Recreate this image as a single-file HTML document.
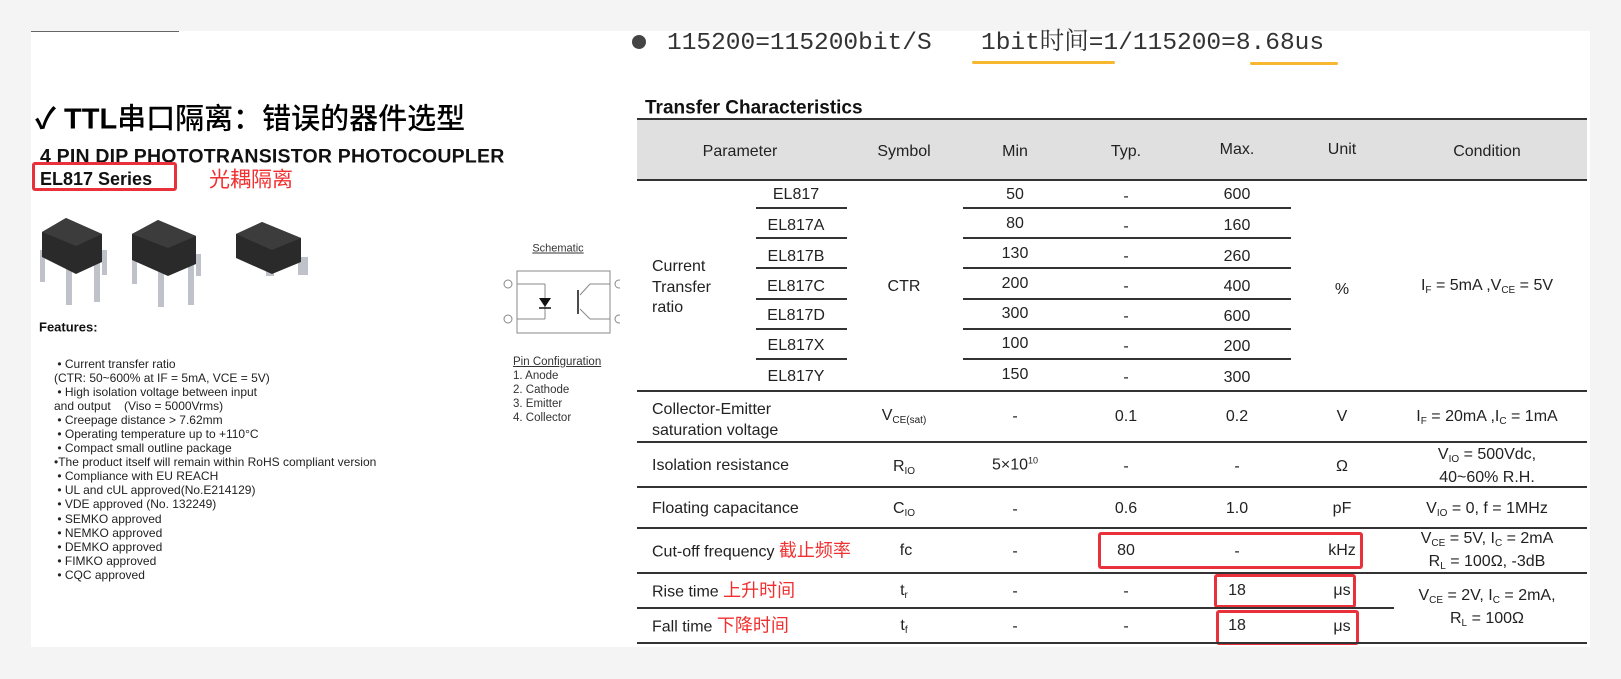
<!DOCTYPE html>
<html><head><meta charset="utf-8">
<style>
*{margin:0;padding:0;box-sizing:border-box}
body{width:1621px;height:679px;background:#f4f4f4;position:relative;overflow:hidden;font-family:"Liberation Sans","Noto Sans CJK SC",sans-serif;color:#111}
.card{position:absolute;left:31px;top:31px;width:1559px;height:616px;background:#fff}
.t{position:absolute;white-space:nowrap;line-height:1}
.c{transform:translate(-50%,-50%)}
.l{transform:translateY(-50%)}
.ln{position:absolute;height:2px;background:#333}
.tb{font-size:16px;color:#222}
.red{color:#f03030}
.box{position:absolute;border:3px solid #e8313a;border-radius:3px}
sub{font-size:10px;vertical-align:-3px}
sup{font-size:9px;vertical-align:6px}
.f{font-size:12px;color:#222}
</style></head><body>
<div class="card"></div>
<div style="position:absolute;left:31px;top:31px;width:148px;height:1px;background:#666"></div>

<!-- top line -->
<div style="position:absolute;left:632px;top:35px;width:14px;height:14px;border-radius:50%;background:#444"></div>
<div class="t l" style="left:667px;top:44px;font-family:'Liberation Mono','Noto Serif CJK SC',monospace;font-size:24.5px;color:#333;letter-spacing:0">115200=115200bit/S</div>
<div class="t l" style="left:981px;top:44px;font-family:'Liberation Mono','Noto Serif CJK SC',monospace;font-size:24.5px;color:#333">1bit时间=1/115200=8.68us</div>
<div style="position:absolute;left:972px;top:61px;width:143px;height:3px;background:#f7b731;border-radius:2px"></div>
<div style="position:absolute;left:1250px;top:62px;width:88px;height:3px;background:#f7b731;border-radius:2px"></div>

<!-- left -->
<div class="t l" style="left:35px;top:120px;font-size:29px;font-weight:bold;color:#000">✓ TTL<span style="font-weight:500">串口隔离：错误的器件选型</span></div>
<div class="t l" style="left:40px;top:157px;font-size:19.5px;font-weight:bold;color:#111;letter-spacing:0.2px">4 PIN DIP PHOTOTRANSISTOR PHOTOCOUPLER</div>
<div class="box" style="left:32px;top:162px;width:145px;height:29px"></div>
<div class="t l" style="left:40px;top:179px;font-size:18px;font-weight:bold">EL817 Series</div>
<div class="t l red" style="left:209px;top:180px;font-size:21px">光耦隔离</div>

<svg style="position:absolute;left:36px;top:212px" width="280" height="95" viewBox="0 0 280 95">
 <g fill="#bfc3c9"><rect x="4" y="38" width="5" height="32"/><rect x="30" y="48" width="6" height="45"/><rect x="58" y="45" width="6" height="45"/><rect x="66" y="38" width="5" height="25"/></g>
 <polygon points="6,20 30,6 66,22 66,50 40,62 6,45" fill="#2a2a2a"/>
 <polygon points="6,20 30,6 66,22 40,34" fill="#3c3c3c"/>
 <g fill="#bfc3c9"><rect x="96" y="42" width="5" height="30"/><rect x="122" y="52" width="6" height="43"/><rect x="152" y="48" width="6" height="45"/><rect x="160" y="42" width="5" height="22"/></g>
 <polygon points="96,22 122,8 160,24 160,52 132,64 96,48" fill="#2a2a2a"/>
 <polygon points="96,22 122,8 160,24 132,36" fill="#3c3c3c"/>
 <g fill="#bfc3c9"><rect x="230" y="40" width="8" height="24"/><rect x="262" y="45" width="10" height="18"/></g>
 <polygon points="200,22 226,10 265,26 265,50 236,62 200,46" fill="#2a2a2a"/>
 <polygon points="200,22 226,10 265,26 236,38" fill="#3c3c3c"/>
</svg>

<div class="t l" style="left:39px;top:327px;font-size:13px;font-weight:bold">Features:</div>
<div class="t f" style="left:54px;top:357px;line-height:14.05px;white-space:pre"> • Current transfer ratio
(CTR: 50~600% at IF = 5mA, VCE = 5V)
 • High isolation voltage between input
and output    (Viso = 5000Vrms)
 • Creepage distance &gt; 7.62mm
 • Operating temperature up to +110°C
 • Compact small outline package
•The product itself will remain within RoHS compliant version
 • Compliance with EU REACH
 • UL and cUL approved(No.E214129)
 • VDE approved (No. 132249)
 • SEMKO approved
 • NEMKO approved
 • DEMKO approved
 • FIMKO approved
 • CQC approved</div>

<div class="t c" style="left:558px;top:249px;font-size:11px;text-decoration:underline;color:#333">Schematic</div>
<svg style="position:absolute;left:500px;top:265px" width="120" height="75" viewBox="0 0 120 75">
 <g fill="none" stroke="#888" stroke-width="1"><rect x="17" y="6" width="93" height="62"/>
 <line x1="17" y1="19" x2="45" y2="19"/><line x1="45" y1="19" x2="45" y2="54"/><line x1="17" y1="54" x2="45" y2="54"/>
 <line x1="110" y1="19" x2="90" y2="19"/><line x1="90" y1="19" x2="80" y2="30"/><line x1="110" y1="54" x2="90" y2="54"/><line x1="90" y1="54" x2="80" y2="44"/>
 <circle cx="8" cy="19" r="4"/><circle cx="8" cy="54" r="4"/><circle cx="119" cy="19" r="4"/><circle cx="119" cy="54" r="4"/></g>
 <polygon points="39,33 51,33 45,42" fill="#111"/><line x1="39" y1="43" x2="51" y2="43" stroke="#111" stroke-width="1.5"/>
 <line x1="78" y1="25" x2="78" y2="49" stroke="#111" stroke-width="1.5"/>
</svg>
<div class="t f" style="left:513px;top:355px;font-size:11.5px;line-height:14px;color:#333"><u>Pin Configuration</u><br>1. Anode<br>2. Cathode<br>3. Emitter<br>4. Collector</div>

<!-- table -->
<div class="t l" style="left:645px;top:108px;font-size:19px;font-weight:bold">Transfer Characteristics</div>
<div style="position:absolute;left:637px;top:119px;width:950px;height:61px;background:#e0e0e0"></div>
<div class="ln" style="left:637px;top:118px;width:950px"></div>
<div class="ln" style="left:637px;top:179px;width:950px"></div>
<div class="t c tb" style="left:740px;top:152px">Parameter</div>
<div class="t c tb" style="left:904px;top:152px">Symbol</div>
<div class="t c tb" style="left:1015px;top:152px">Min</div>
<div class="t c tb" style="left:1126px;top:152px">Typ.</div>
<div class="t c tb" style="left:1237px;top:150px">Max.</div>
<div class="t c tb" style="left:1342px;top:150px">Unit</div>
<div class="t c tb" style="left:1487px;top:152px">Condition</div>

<div class="t c tb" style="left:796px;top:195px">EL817</div>
<div class="t c tb" style="left:796px;top:226px">EL817A</div>
<div class="t c tb" style="left:796px;top:257px">EL817B</div>
<div class="t c tb" style="left:796px;top:287px">EL817C</div>
<div class="t c tb" style="left:796px;top:316px">EL817D</div>
<div class="t c tb" style="left:796px;top:346px">EL817X</div>
<div class="t c tb" style="left:796px;top:377px">EL817Y</div>
<div class="t c tb" style="left:1015px;top:195px">50</div><div class="t c tb" style="left:1126px;top:197px">-</div><div class="t c tb" style="left:1237px;top:195px">600</div>
<div class="t c tb" style="left:1015px;top:224px">80</div><div class="t c tb" style="left:1126px;top:227px">-</div><div class="t c tb" style="left:1237px;top:226px">160</div>
<div class="t c tb" style="left:1015px;top:254px">130</div><div class="t c tb" style="left:1126px;top:257px">-</div><div class="t c tb" style="left:1237px;top:257px">260</div>
<div class="t c tb" style="left:1015px;top:284px">200</div><div class="t c tb" style="left:1126px;top:287px">-</div><div class="t c tb" style="left:1237px;top:287px">400</div>
<div class="t c tb" style="left:1015px;top:314px">300</div><div class="t c tb" style="left:1126px;top:317px">-</div><div class="t c tb" style="left:1237px;top:317px">600</div>
<div class="t c tb" style="left:1015px;top:344px">100</div><div class="t c tb" style="left:1126px;top:347px">-</div><div class="t c tb" style="left:1237px;top:347px">200</div>
<div class="t c tb" style="left:1015px;top:375px">150</div><div class="t c tb" style="left:1126px;top:378px">-</div><div class="t c tb" style="left:1237px;top:378px">300</div>
<div class="ln" style="left:756px;top:207px;width:91px"></div><div class="ln" style="left:963px;top:207px;width:328px"></div>
<div class="ln" style="left:756px;top:237px;width:91px"></div><div class="ln" style="left:963px;top:237px;width:328px"></div>
<div class="ln" style="left:756px;top:267px;width:91px"></div><div class="ln" style="left:963px;top:267px;width:328px"></div>
<div class="ln" style="left:756px;top:298px;width:91px"></div><div class="ln" style="left:963px;top:298px;width:328px"></div>
<div class="ln" style="left:756px;top:328px;width:91px"></div><div class="ln" style="left:963px;top:328px;width:328px"></div>
<div class="ln" style="left:756px;top:358px;width:91px"></div><div class="ln" style="left:963px;top:358px;width:328px"></div>
<div class="t tb" style="left:652px;top:257px;line-height:20.5px">Current<br>Transfer<br>ratio</div>
<div class="t c tb" style="left:904px;top:287px">CTR</div>
<div class="t c tb" style="left:1342px;top:290px">%</div>
<div class="t c tb" style="left:1487px;top:287px">I<sub>F</sub> = 5mA ,V<sub>CE</sub> = 5V</div>
<div class="ln" style="left:637px;top:390px;width:950px"></div>

<div class="t tb" style="left:652px;top:399px;line-height:21px">Collector-Emitter<br>saturation voltage</div>
<div class="t c tb" style="left:904px;top:417px">V<sub>CE(sat)</sub></div>
<div class="t c tb" style="left:1015px;top:417px">-</div>
<div class="t c tb" style="left:1126px;top:417px">0.1</div>
<div class="t c tb" style="left:1237px;top:417px">0.2</div>
<div class="t c tb" style="left:1342px;top:417px">V</div>
<div class="t c tb" style="left:1487px;top:418px">I<sub>F</sub> = 20mA ,I<sub>C</sub> = 1mA</div>
<div class="ln" style="left:637px;top:441px;width:950px"></div>

<div class="t l tb" style="left:652px;top:466px">Isolation resistance</div>
<div class="t c tb" style="left:904px;top:468px">R<sub>IO</sub></div>
<div class="t c tb" style="left:1015px;top:465px">5×10<sup>10</sup></div>
<div class="t c tb" style="left:1126px;top:467px">-</div>
<div class="t c tb" style="left:1237px;top:467px">-</div>
<div class="t c tb" style="left:1342px;top:467px">Ω</div>
<div class="t c tb" style="left:1487px;top:456px">V<sub>IO</sub> = 500Vdc,</div>
<div class="t c tb" style="left:1487px;top:478px">40~60% R.H.</div>
<div class="ln" style="left:637px;top:486px;width:950px"></div>

<div class="t l tb" style="left:652px;top:509px">Floating capacitance</div>
<div class="t c tb" style="left:904px;top:510px">C<sub>IO</sub></div>
<div class="t c tb" style="left:1015px;top:510px">-</div>
<div class="t c tb" style="left:1126px;top:509px">0.6</div>
<div class="t c tb" style="left:1237px;top:509px">1.0</div>
<div class="t c tb" style="left:1342px;top:509px">pF</div>
<div class="t c tb" style="left:1487px;top:510px">V<sub>IO</sub> = 0, f = 1MHz</div>
<div class="ln" style="left:637px;top:527px;width:950px"></div>

<div class="t l tb" style="left:652px;top:551px">Cut-off frequency <span class="red" style="font-size:18px">截止频率</span></div>
<div class="t c tb" style="left:906px;top:551px">fc</div>
<div class="t c tb" style="left:1015px;top:552px">-</div>
<div class="t c tb" style="left:1126px;top:551px">80</div>
<div class="t c tb" style="left:1237px;top:552px">-</div>
<div class="t c tb" style="left:1342px;top:551px">kHz</div>
<div class="t c tb" style="left:1487px;top:540px">V<sub>CE</sub> = 5V, I<sub>C</sub> = 2mA</div>
<div class="t c tb" style="left:1487px;top:563px">R<sub>L</sub> = 100Ω, -3dB</div>
<div class="box" style="left:1098px;top:532px;width:265px;height:37px"></div>
<div class="ln" style="left:637px;top:572px;width:950px"></div>

<div class="t l tb" style="left:652px;top:591px">Rise time <span class="red" style="font-size:18px">上升时间</span></div>
<div class="t c tb" style="left:904px;top:592px">t<sub>r</sub></div>
<div class="t c tb" style="left:1015px;top:592px">-</div>
<div class="t c tb" style="left:1126px;top:592px">-</div>
<div class="t c tb" style="left:1237px;top:591px">18</div>
<div class="t c tb" style="left:1342px;top:591px">μs</div>
<div class="box" style="left:1214px;top:574px;width:142px;height:34px"></div>
<div class="ln" style="left:637px;top:607px;width:757px"></div>
<div class="t c tb" style="left:1487px;top:597px">V<sub>CE</sub> = 2V, I<sub>C</sub> = 2mA,</div>
<div class="t c tb" style="left:1487px;top:620px">R<sub>L</sub> = 100Ω</div>

<div class="t l tb" style="left:652px;top:626px">Fall time <span class="red" style="font-size:18px">下降时间</span></div>
<div class="t c tb" style="left:904px;top:627px">t<sub>f</sub></div>
<div class="t c tb" style="left:1015px;top:627px">-</div>
<div class="t c tb" style="left:1126px;top:627px">-</div>
<div class="t c tb" style="left:1237px;top:626px">18</div>
<div class="t c tb" style="left:1342px;top:627px">μs</div>
<div class="box" style="left:1216px;top:610px;width:143px;height:35px"></div>
<div class="ln" style="left:637px;top:642px;width:950px"></div>
</body></html>
